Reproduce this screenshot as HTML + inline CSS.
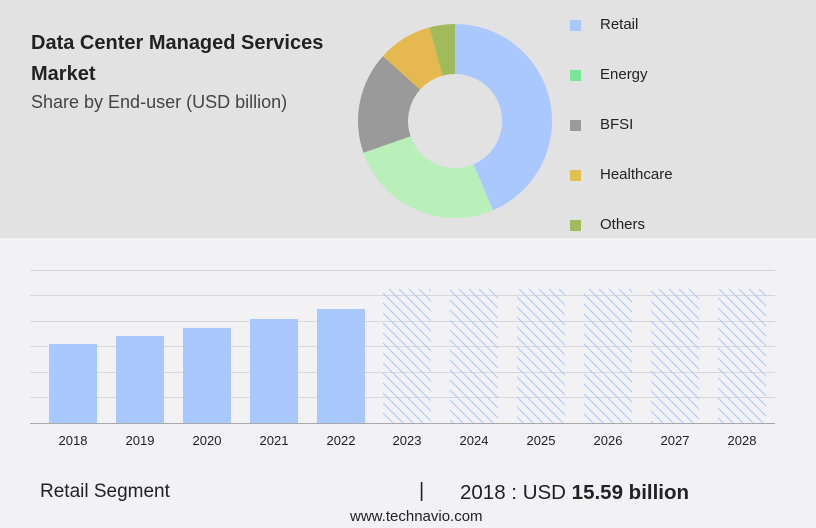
<!DOCTYPE html><html><head><style>
body{margin:0;width:816px;height:528px;background:#f2f2f4;font-family:"Liberation Sans",sans-serif;position:relative;overflow:hidden}
.top{position:absolute;left:0;top:0;width:816px;height:238px;background:#e2e2e2}
.t{position:absolute;left:31px;top:28px;font-size:20px;font-weight:bold;color:#222;line-height:31px;width:330px}
.s{position:absolute;left:31px;top:92px;font-size:18px;color:#444}
.lg{position:absolute;left:570px;font-size:15px;color:#222}
.lg i{position:absolute;left:0;top:4px;width:11px;height:11px}
.lg span{position:absolute;left:30px;top:0;white-space:nowrap}
.yr{position:absolute;top:433px;font-size:13px;color:#222;width:60px;text-align:center}
</style></head><body>
<div class="top"></div>
<div class="t">Data Center Managed Services Market</div>
<div class="s">Share by End-user (USD billion)</div>
<svg style="position:absolute;left:0;top:0" width="816" height="528">
<g transform="translate(455,121)">
<path d="M0,-97 A97,97 0 0 1 37.9,89.3 L18.4,43.3 A47,47 0 0 0 0,-47Z" fill="#a8c8fe"/>
<path d="M37.9,89.3 A97,97 0 0 1 -91.6,31.8 L-44.4,15.4 A47,47 0 0 0 18.4,43.3Z" fill="#b9efb9"/>
<path d="M-91.6,31.8 A97,97 0 0 1 -72.1,-64.9 L-34.9,-31.4 A47,47 0 0 0 -44.4,15.4Z" fill="#9a9a9a"/>
<path d="M-72.1,-64.9 A97,97 0 0 1 -25.6,-93.6 L-12.4,-45.3 A47,47 0 0 0 -34.9,-31.4Z" fill="#e5b94f"/>
<path d="M-25.6,-93.6 A97,97 0 0 1 0,-97 L0,-47 A47,47 0 0 0 -12.4,-45.3Z" fill="#a0ba5c"/>
</g>
<defs><pattern id="h" width="10" height="10" patternUnits="userSpaceOnUse"><path d="M0,0 L10,10 M-5,5 L5,15 M5,-5 L15,5" stroke="#a8c8fe" stroke-width="1"/></pattern></defs>
<g stroke="#d8d8dc" stroke-width="1">
<line x1="30" x2="775" y1="270.5" y2="270.5"/><line x1="30" x2="775" y1="295.5" y2="295.5"/><line x1="30" x2="775" y1="321.5" y2="321.5"/><line x1="30" x2="775" y1="346.5" y2="346.5"/><line x1="30" x2="775" y1="372.5" y2="372.5"/><line x1="30" x2="775" y1="397.5" y2="397.5"/>
</g>
<g fill="#a8c8fe">
<rect x="49" y="344" width="48" height="79"/><rect x="116" y="336" width="48" height="87"/><rect x="183" y="328" width="48" height="95"/><rect x="250" y="319" width="48" height="104"/><rect x="317" y="309" width="48" height="114"/>
</g>
<g fill="url(#h)">
<rect x="383" y="289" width="48" height="134"/><rect x="450" y="289" width="48" height="134"/><rect x="517" y="289" width="48" height="134"/><rect x="584" y="289" width="48" height="134"/><rect x="651" y="289" width="48" height="134"/><rect x="718" y="289" width="48" height="134"/>
</g>
<line x1="30" x2="775" y1="423.5" y2="423.5" stroke="#aaa"/>
</svg>
<div class="lg" style="top:16px"><i style="background:#a8c8fe"></i><span>Retail</span></div>
<div class="lg" style="top:66px"><i style="background:#7ae59a"></i><span>Energy</span></div>
<div class="lg" style="top:116px"><i style="background:#9a9a9a"></i><span>BFSI</span></div>
<div class="lg" style="top:166px"><i style="background:#e0c050"></i><span>Healthcare</span></div>
<div class="lg" style="top:216px"><i style="background:#a0ba5c"></i><span>Others</span></div>
<div class="yr" style="left:43px">2018</div><div class="yr" style="left:110px">2019</div><div class="yr" style="left:177px">2020</div><div class="yr" style="left:244px">2021</div><div class="yr" style="left:311px">2022</div><div class="yr" style="left:377px">2023</div><div class="yr" style="left:444px">2024</div><div class="yr" style="left:511px">2025</div><div class="yr" style="left:578px">2026</div><div class="yr" style="left:645px">2027</div><div class="yr" style="left:712px">2028</div>
<div style="position:absolute;left:40px;top:481px;font-size:19px;color:#222">Retail Segment</div>
<div style="position:absolute;left:419px;top:480px;font-size:20px;color:#222">|</div>
<div style="position:absolute;left:460px;top:481px;font-size:20.5px;color:#222;white-space:nowrap">2018 : USD <b>15.59 billion</b></div>
<div style="position:absolute;left:350px;top:508px;font-size:15px;color:#222">www.technavio.com</div>
</body></html>
